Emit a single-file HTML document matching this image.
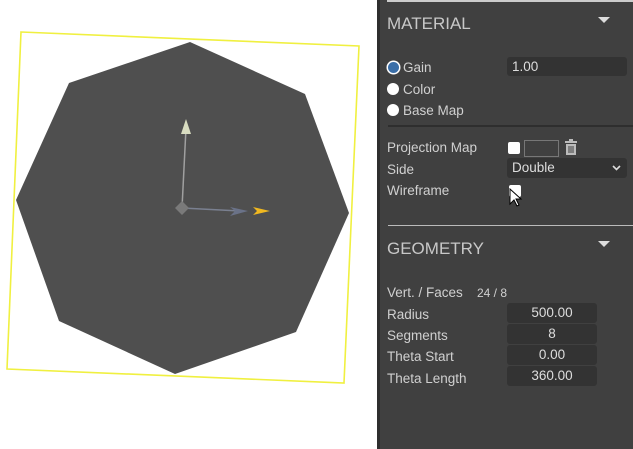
<!DOCTYPE html>
<html><head><style>
body{margin:0;width:633px;height:449px;position:relative;overflow:hidden;background:#fff;font-family:"Liberation Sans",sans-serif;}
#p{position:absolute;left:377px;top:0;width:256px;height:449px;background:#404040;border-left:3px solid #2e2e2e;box-sizing:border-box;color:#d0d0d0;font-size:13.5px;}
.a{position:absolute;}
.h{font-size:17px;color:#c8c8c8;}
.tri{position:absolute;width:0;height:0;border-left:6px solid transparent;border-right:6px solid transparent;border-top:6px solid #ddd;}
.in{position:absolute;background:#333;border-radius:3px;color:#ddd;box-sizing:border-box;}
.rad{position:absolute;width:11px;height:11px;border-radius:50%;background:#fff;}
.hr{position:absolute;left:8px;right:0;height:1px;background:#bbb;}
</style></head><body>
<svg width="377" height="449" style="position:absolute;left:0;top:0">
<polygon points="190,42 305,94 349,213 296,332 175,374 59,321 16,200 69,83" fill="#4f4f4f"/>
<polygon points="21,32 359,46 344,383 7,369" fill="none" stroke="#f0f040" stroke-width="1.6"/>
<line x1="182" y1="208" x2="186" y2="128" stroke="#a0a0a0" stroke-width="1.5"/>
<polygon points="186,119 181,134 191,134" fill="#d8dcc0"/>
<line x1="182" y1="208" x2="240" y2="211" stroke="#7a8090" stroke-width="1.5"/>
<polygon points="230,207 248,211 230,216 235,211" fill="#6a7288"/>
<polygon points="253,207 270,211 253,215 257,211" fill="#f0b820"/>
<polygon points="182,201 189,208 182,215 175,208" fill="#7a7a7a"/>
</svg>
<div id="p">
<div class="a" style="left:7px;top:0;width:250px;height:2px;background:#ccc"></div>
<div class="a h" style="left:7px;top:14px">MATERIAL</div>
<div class="tri" style="left:218px;top:17px"></div>
<div class="rad" style="left:8px;top:62px;background:#3a6ea8;box-shadow:0 0 0 1.5px #fff"></div>
<div class="a" style="left:23px;top:60px">Gain</div>
<div class="in" style="left:127px;top:57px;width:120px;height:19px;padding:2px 5px">1.00</div>
<div class="rad" style="left:7px;top:83px;width:12px;height:12px"></div>
<div class="a" style="left:23px;top:82px">Color</div>
<div class="rad" style="left:7px;top:104px;width:12px;height:12px"></div>
<div class="a" style="left:23px;top:103px">Base Map</div>
<div class="hr" style="top:125px;background:#2e2e2e;height:2px"></div>
<div class="a" style="left:7px;top:140px">Projection Map</div>
<div class="a" style="left:128px;top:142px;width:12px;height:12px;background:#fff;border-radius:2px"></div>
<div class="a" style="left:144px;top:140px;width:33px;height:15px;border:1px solid #777"></div>
<svg class="a" style="left:184px;top:139px" width="14" height="16"><rect x="1" y="2" width="12" height="2" fill="#bbb"/><rect x="5" y="0" width="4" height="2" fill="#bbb"/><rect x="2" y="5" width="10" height="11" fill="#bbb"/><line x1="5" y1="7" x2="5" y2="14" stroke="#404040"/><line x1="7" y1="7" x2="7" y2="14" stroke="#404040"/><line x1="9" y1="7" x2="9" y2="14" stroke="#404040"/></svg>
<div class="a" style="left:7px;top:162px">Side</div>
<div class="in" style="left:127px;top:158px;width:120px;height:20px;padding:2px 5px">Double<svg style="position:absolute;right:6px;top:7px" width="9" height="6"><polyline points="1,1 4.5,4.5 8,1" fill="none" stroke="#ddd" stroke-width="1.6"/></svg></div>
<div class="a" style="left:7px;top:183px">Wireframe</div>
<div class="a" style="left:129px;top:185px;width:12px;height:12px;background:#fff;border-radius:2px"></div>
<svg class="a" style="left:129px;top:188px" width="14" height="20"><polygon points="1,1 1,16 5,12 8,18 10,17 7,11 12,11" fill="#fff" stroke="#000" stroke-width="1"/></svg>
<div class="hr" style="top:225px"></div>
<div class="a h" style="left:7px;top:239px">GEOMETRY</div>
<div class="tri" style="left:218px;top:241px"></div>
<div class="a" style="left:7px;top:285px">Vert. / Faces</div>
<div class="a" style="left:97px;top:286px;font-size:12px">24 / 8</div>
<div class="a" style="left:7px;top:307px">Radius</div>
<div class="in" style="left:127px;top:303px;width:90px;height:20px;text-align:center;padding-top:2px">500.00</div>
<div class="a" style="left:7px;top:328px">Segments</div>
<div class="in" style="left:127px;top:324px;width:90px;height:20px;text-align:center;padding-top:2px">8</div>
<div class="a" style="left:7px;top:349px">Theta Start</div>
<div class="in" style="left:127px;top:345px;width:90px;height:20px;text-align:center;padding-top:2px">0.00</div>
<div class="a" style="left:7px;top:371px">Theta Length</div>
<div class="in" style="left:127px;top:366px;width:90px;height:20px;text-align:center;padding-top:2px">360.00</div>
</div>
</body></html>
